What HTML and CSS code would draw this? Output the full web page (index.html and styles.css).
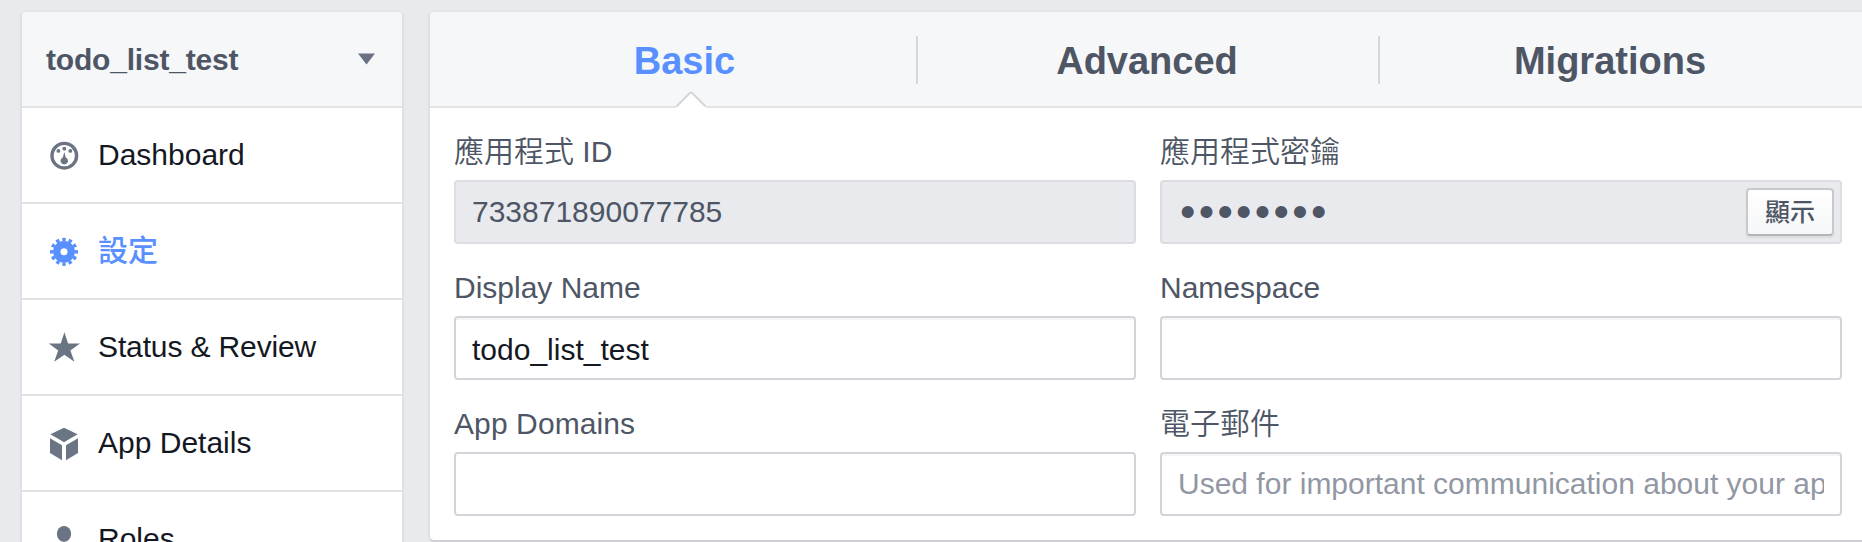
FILE: index.html
```html
<!DOCTYPE html>
<html lang="zh-Hant">
<head>
<meta charset="utf-8">
<title>todo_list_test</title>
<link rel="stylesheet" href="styles.css">
</head>
<body>
<div class="page">
  <nav class="sidebar">
    <div class="app-picker">
      <span class="app-name">todo_list_test</span>
      <svg class="caret" width="18" height="12" viewBox="0 0 18 12"><path d="M0 0.5H17L8.5 11.5Z"/></svg>
    </div>
    <a class="nav-item">
      <svg class="icon" viewBox="0 0 40 40"><circle cx="20.3" cy="20.7" r="12.3" fill="none" stroke="currentColor" stroke-width="3.4"/><circle cx="14.4" cy="15.9" r="1.9"/><circle cx="20.3" cy="13.7" r="1.9"/><circle cx="26.3" cy="15.9" r="1.9"/><path d="M20.3 17L21.8 22.4A3.7 3.7 0 1 1 18.8 22.4Z"/></svg>
      <span>Dashboard</span>
    </a>
    <a class="nav-item active">
      <svg class="icon" viewBox="0 0 40 40"><circle cx="20" cy="20.8" r="7.2" fill="none" stroke="currentColor" stroke-width="7.4"/><circle cx="20" cy="20.8" r="12.3" fill="none" stroke="currentColor" stroke-width="3.4" pathLength="120" stroke-dasharray="5.4 4.6" stroke-dashoffset="2.7"/></svg>
      <span>設定</span>
    </a>
    <a class="nav-item">
      <svg class="icon" viewBox="0 0 40 40"><path d="M20.4 5.2L24.1 16.6H36L26.4 23.5L30.4 34.8L20.4 27.7L10.2 34.8L14.2 23.5L4.8 16.6H16.7Z"/></svg>
      <span class="tight">Status &amp; Review</span>
    </a>
    <a class="nav-item">
      <svg class="icon" viewBox="0 0 40 40"><path d="M20 4.8L33.6 11.2L20 19.2L6.4 11.2Z"/><path d="M6 15.2L18 22.2V37.2L6 30Z"/><path d="M34 15.2L22 22.2V37.2L34 30Z"/></svg>
      <span>App Details</span>
    </a>
    <a class="nav-item">
      <svg class="icon" viewBox="0 0 40 40"><ellipse cx="20" cy="14.9" rx="7.1" ry="8"/><path d="M7 37C7 28 13 26 20 26S33 28 33 37Z"/></svg>
      <span>Roles</span>
    </a>
  </nav>

  <main class="panel">
    <div class="tabs">
      <a class="tab selected">Basic<svg class="pointer" width="30" height="17" viewBox="0 0 30 17"><path d="M0 17V15.6L15 1L30 15.6V17Z" fill="#fff"/><path d="M0.3 15.6L13.8 2Q15 0.9 16.2 2L29.7 15.6" fill="none" stroke="#d3d5da" stroke-width="2"/></svg></a>
      <a class="tab">Advanced</a>
      <a class="tab last">Migrations</a>
    </div>
    <form class="fields">
      <div class="field">
        <label class="label">應用程式 ID</label>
        <div class="box disabled">733871890077785</div>
      </div>
      <div class="field">
        <label class="label">應用程式密鑰</label>
        <div class="box disabled secret"><span class="dots">••••••••</span><button type="button" class="show">顯示</button></div>
      </div>
      <div class="field">
        <label class="label">Display Name</label>
        <div class="box value">todo_list_test</div>
      </div>
      <div class="field">
        <label class="label">Namespace</label>
        <div class="box"></div>
      </div>
      <div class="field">
        <label class="label wide">App Domains</label>
        <div class="box plain"></div>
      </div>
      <div class="field">
        <label class="label">電子郵件</label>
        <div class="box placeholder"><span class="clip">Used for important communication about your app</span></div>
      </div>
    </form>
  </main>
</div>
</body>
</html>
```
FILE: styles.css
```css
* { box-sizing: border-box; }

body {
  margin: 0;
  background: #e9eaed;
  color: #141823;
  font: 30px/34px "Liberation Sans", "Noto Sans CJK TC", sans-serif;
}

.page {
  display: flex;
  align-items: flex-start;
  gap: 24px;
  height: 542px;
  overflow: hidden;
  padding: 10px 0 0 20px;
}

.sidebar {
  flex: none;
  width: 384px;
  border: 2px solid #dfe0e4;
  border-top-color: #e5e6e9;
  border-radius: 6px;
  background: #fff;
}

.app-picker {
  display: flex;
  align-items: center;
  justify-content: space-between;
  height: 96px;
  padding: 0 26px 0 24px;
  border-bottom: 2px solid #e3e4e6;
  border-radius: 4px 4px 0 0;
  background: #f6f7f9;
  color: #4e5665;
  font-weight: bold;
}

.app-name {
  padding-top: 1px;
  letter-spacing: -0.2px;
}

.caret { fill: #6a7180; }

.nav-item {
  display: flex;
  align-items: center;
  gap: 14px;
  height: 96px;
  padding-left: 22px;
  border-bottom: 2px solid #e3e4e6;
}

.nav-item.active {
  color: #5890ff;
  font-weight: 500;
}

.tight { letter-spacing: -0.13px; }

.icon {
  flex: none;
  width: 40px;
  height: 40px;
  color: #6a7482;
  fill: currentColor;
}

.active .icon { color: #5890ff; }

.panel {
  flex: none;
  width: 1440px;
  height: 532px;
  border: 2px solid #dfe0e4;
  border-top-color: #e5e6e9;
  border-bottom-color: #d0d1d5;
  border-radius: 6px;
  background: #fff;
}

.tabs {
  display: flex;
  height: 96px;
  padding: 0 24px;
  border-bottom: 2px solid #e3e4e6;
  border-radius: 4px 4px 0 0;
  background: #f6f7f9;
}

.tab {
  position: relative;
  flex: none;
  display: flex;
  align-items: center;
  justify-content: center;
  width: 462px;
  height: 48px;
  margin-top: 24px;
  padding-top: 2px;
  color: #4e5665;
  font-size: 38px;
  font-weight: bold;
}

.tab + .tab {
  padding-right: 2px;
  border-left: 2px solid #d6d8de;
}

.tab + .tab.last { padding-right: 0; }

.tab.selected {
  padding-right: 1px;
  color: #5890ff;
}

.pointer {
  position: absolute;
  left: 222px;
  top: 55px;
}

.fields {
  display: grid;
  grid-template-columns: 682px 682px;
  gap: 27px 24px;
  padding: 27px 24px 0;
}

.field {
  display: flex;
  flex-direction: column;
  gap: 11px;
}

.label {
  height: 34px;
  color: #4e5665;
  font-weight: 350;
}

.label.wide { letter-spacing: 0.1px; }

.box {
  display: flex;
  align-items: center;
  height: 64px;
  padding: 0 16px;
  border: 2px solid #d1d5da;
  border-radius: 4px;
  background: #fff;
  box-shadow: inset 0 2px 0 #f5f5f6;
}

.box.plain { box-shadow: none; }
.box.value { padding-top: 4px; }

.box.disabled {
  border-color: #dcdde3;
  background: #e9eaed;
  color: #4e5665;
  box-shadow: none;
}

.box.secret {
  justify-content: space-between;
  padding: 0 6px 0 18px;
}

.dots {
  font-size: 44px;
  letter-spacing: 3.3px;
}

.show {
  width: 88px;
  height: 48px;
  padding: 0;
  border: 2px solid #c8c9cc;
  border-bottom-color: #b5b6b9;
  border-radius: 4px;
  background: linear-gradient(#fff, #f6f7f8);
  box-shadow: 0 2px 2px rgba(0, 0, 0, 0.06);
  color: #4e5665;
  font: 500 25px/34px "Liberation Sans", "Noto Sans CJK TC", sans-serif;
}

.placeholder { color: #9197a3; }

.clip {
  overflow: hidden;
  white-space: nowrap;
}
```
